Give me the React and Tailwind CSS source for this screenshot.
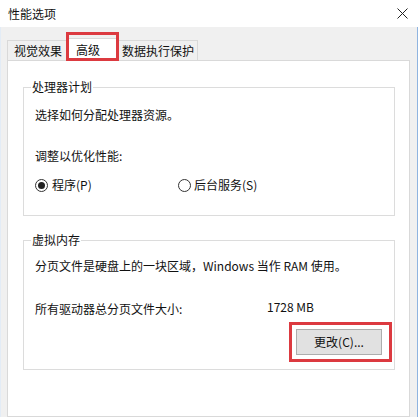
export default function App() {
  return (
    <div
      className="w-[418px] h-[417px] flex flex-col overflow-hidden bg-[#f0f0f0] text-[12px] leading-4 text-[#111]"
      style={{fontFamily: '"Noto Sans CJK SC", "Noto Sans", sans-serif'}}
    >
      {/* 标题栏 */}
      <div className="h-[27px] shrink-0 bg-white flex items-center justify-between pl-[8px] pr-[10px]">
        <span>性能选项</span>
        <svg width="11" height="11" viewBox="0 0 11 11" className="text-[#222]">
          <path d="M0.5 0.5 L10.5 10.5 M10.5 0.5 L0.5 10.5" stroke="currentColor" strokeWidth="1" />
        </svg>
      </div>

      <div className="flex-1 flex flex-col border-r border-r-[#8fb4e0] border-l border-l-[#e3ecf6]">
        {/* 选项卡 */}
        <div className="h-[33px] shrink-0 flex items-end pl-[6px]">
          <div className="h-[20px] w-[61px] border border-b-0 border-[#d9d9d9] bg-[#f0f0f0] flex items-center pl-[6px]">视觉效果</div>
          <div className="relative h-[23px] w-[49px] -mb-px z-10 border border-b-0 border-[#d9d9d9] bg-white flex items-center pl-[7px]">
            高级
            <div className="absolute -left-[3px] -right-[3px] -top-[7px] -bottom-[0px] border-[3px] border-[#dc3a40]"></div>
          </div>
          <div className="h-[20px] w-[81px] border border-b-0 border-[#d9d9d9] bg-[#f0f0f0] flex items-center pl-[4px]">数据执行保护</div>
        </div>

        {/* 面板 */}
        <div className="flex-1 ml-[6px] mr-[7px] border border-[#d9d9d9] bg-white pl-[15px] pr-[14px] pt-[18px]">
          <fieldset className="border border-[#dcdcdc] px-0">
            <legend className="ml-[7px] px-[1px] leading-4">处理器计划</legend>
            <div className="pl-[11px] pb-[22px]">
              <div className="mt-[12px]">选择如何分配处理器资源。</div>
              <div className="mt-[25px]">调整以优化性能:</div>
              <div className="mt-[13px] flex items-center">
                <label className="w-[143px] flex items-center gap-[4px]">
                  <span className="w-[13px] h-[13px] rounded-full border border-[#333] flex items-center justify-center">
                    <span className="w-[7px] h-[7px] rounded-full bg-[#222]"></span>
                  </span>
                  程序(P)
                </label>
                <label className="flex items-center gap-[3px]">
                  <span className="w-[13px] h-[13px] rounded-full border border-[#333]"></span>
                  后台服务(S)
                </label>
              </div>
            </div>
          </fieldset>

          <fieldset className="mt-[16px] border border-[#dcdcdc] px-0">
            <legend className="ml-[7px] px-[1px] leading-4">虚拟内存</legend>
            <div className="pl-[11px] pr-[12px] pb-[14px]">
              <div className="mt-[10px]">分页文件是硬盘上的一块区域，Windows 当作 RAM 使用。</div>
              <div className="mt-[27px] flex">
                <span className="w-[232px]">所有驱动器总分页文件大小:</span>
                <span className="-mt-[2px]">1728 MB</span>
              </div>
              <div className="mt-[12px] flex justify-end">
                <div className="relative">
                  <button className="w-[86px] h-[26px] bg-[#e1e1e1] border border-[#adadad] flex items-center justify-center">
                    更改(C)...
                  </button>
                  <div className="absolute -left-[7px] -right-[10px] -top-[7px] -bottom-[7px] border-[3px] border-[#dc3a40]"></div>
                </div>
              </div>
            </div>
          </fieldset>
        </div>
      </div>
    </div>
  );
}
